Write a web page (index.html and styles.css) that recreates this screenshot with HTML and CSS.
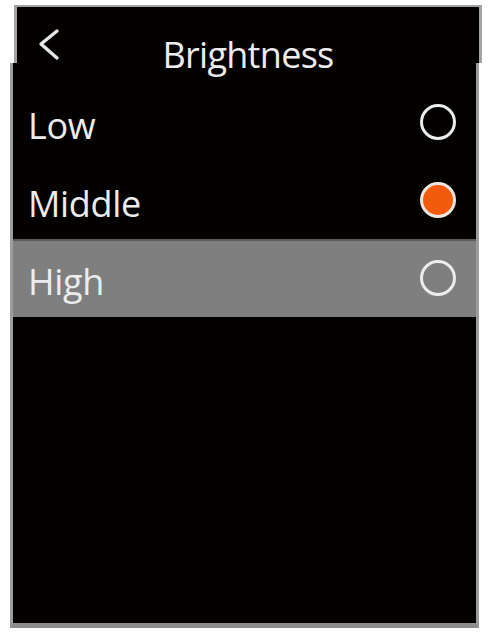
FILE: index.html
```html
<!DOCTYPE html>
<html>
<head>
<meta charset="utf-8">
<link rel="stylesheet" href="styles.css">
</head>
<body>
<div class="screen">
  <div class="header">
    <svg class="back" width="24" height="34" viewBox="0 0 24 34">
      <polyline points="19,3 3,16 19,30" fill="none" stroke="#e6e6e6" stroke-width="3.4" stroke-linecap="round" stroke-linejoin="round"/>
    </svg>
    <div class="title">Brightness</div>
  </div>
  <div class="body">
    <div class="row">
      <span class="label">Low</span>
      <span class="radio"></span>
    </div>
    <div class="row">
      <span class="label">Middle</span>
      <span class="radio checked"></span>
    </div>
    <div class="row selected">
      <span class="label">High</span>
      <span class="radio"></span>
    </div>
  </div>
</div>
</body>
</html>
```

FILE: styles.css
```css
html, body {
  margin: 0;
  padding: 0;
  background: #ffffff;
}
.screen {
  padding-top: 5px;
  font-family: "Open Sans", "Liberation Sans", sans-serif;
  color: #ececec;
}
.header {
  margin-left: 14px;
  width: 462px;
  height: 56px;
  background: #030000;
  border-top: 2px solid #a3a3a3;
  border-left: 3px solid #a3a3a3;
  border-right: 3px solid #a3a3a3;
  display: flex;
  justify-content: center;
  position: relative;
}
.back {
  position: absolute;
  left: 21px;
  top: 21px;
}
.title {
  font-size: 36px;
  line-height: 49px;
  padding-top: 23px;
  letter-spacing: -0.7px;
}
.body {
  margin-left: 10px;
  width: 463px;
  height: 540px;
  background: #030000;
  border-left: 3px solid #9c9c9c;
  border-right: 3px solid #9c9c9c;
  border-bottom: 5px solid #8c8c8c;
  padding-top: 20px;
  box-sizing: content-box;
}
.row {
  height: 78px;
  display: flex;
  align-items: center;
  justify-content: space-between;
  padding: 0 20px 0 15px;
}
.row.selected {
  background: #7f7f7f;
  box-shadow: inset 0 2px 0 #5a5a5a;
}
.label {
  font-size: 36px;
  line-height: 49px;
  padding-top: 6px;
  letter-spacing: -0.3px;
}
.radio {
  width: 30px;
  height: 30px;
  border: 3px solid #ececec;
  border-radius: 50%;
  box-sizing: content-box;
}
.radio.checked {
  background: #f45a0c;
  border-color: #f0e6df;
}
```
